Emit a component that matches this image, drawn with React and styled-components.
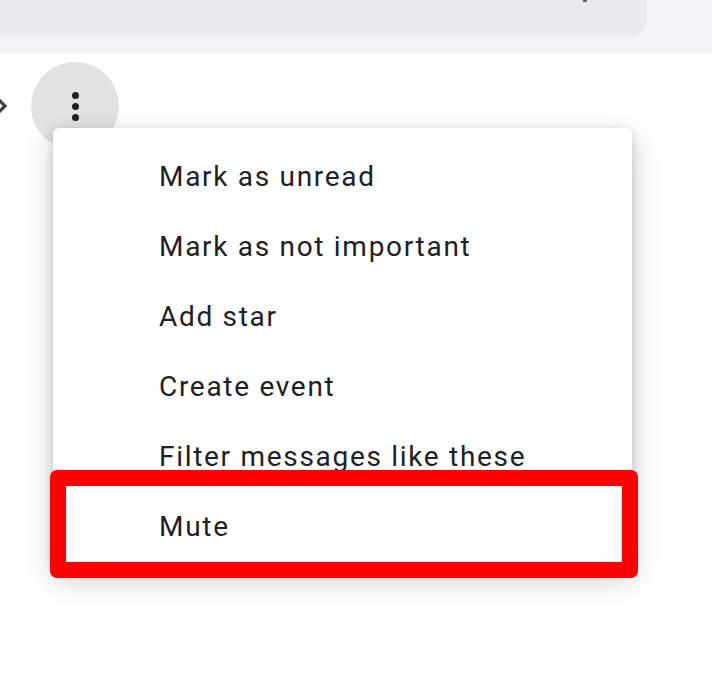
import React from 'react';
import styled, { createGlobalStyle } from 'styled-components';

const GlobalStyle = createGlobalStyle`
  html, body {
    margin: 0;
    padding: 0;
    background: #ffffff;
    font-family: Roboto, "Liberation Sans", Arial, sans-serif;
  }
`;

const Page = styled.div`
  position: relative;
  width: 712px;
  height: 692px;
  overflow: hidden;
  background: #ffffff;
`;

const Header = styled.header`
  height: 53px;
  background: #f1f3f4;
`;

const SearchBox = styled.div`
  position: relative;
  width: 647px;
  height: 35px;
  background: #e8eaed;
  border-radius: 0 0 16px 0;
`;

const SearchIconTip = styled.span`
  position: absolute;
  left: 583px;
  top: 0;
  width: 4px;
  height: 2px;
  background: #5f6368;
`;

const Toolbar = styled.div`
  display: flex;
  align-items: center;
  gap: 24px;
  padding-top: 9px;
`;

const BackGlyph = styled.svg`
  width: 12px;
  height: 14px;
  margin-left: -5px;
  color: #3c4043;
`;

const MoreButton = styled.button`
  width: 88px;
  height: 88px;
  border: none;
  border-radius: 50%;
  background: #e2e2e2;
  display: flex;
  flex-direction: column;
  align-items: center;
  justify-content: center;
  gap: 4px;
  padding: 0;
`;

const Dot = styled.span`
  width: 7px;
  height: 7px;
  border-radius: 50%;
  background: #202124;
`;

const Menu = styled.ul`
  position: absolute;
  top: 128px;
  left: 53px;
  width: 579px;
  margin: 0;
  padding: 13px 0 8px;
  list-style: none;
  background: #ffffff;
  border-radius: 6px;
  box-shadow: 0 10px 28px rgba(0, 0, 0, 0.22), 0 2px 8px rgba(0, 0, 0, 0.12);
`;

const MenuItem = styled.li`
  height: 70px;
  display: flex;
  align-items: center;
  padding-left: 106px;
  font-size: 28px;
  color: #202124;
  letter-spacing: 1.7px;
`;

const Highlight = styled.div`
  position: absolute;
  top: 470px;
  left: 50px;
  width: 588px;
  height: 108px;
  box-sizing: border-box;
  border: 16px solid #ff0000;
  border-radius: 7px;
`;

const items = [
  'Mark as unread',
  'Mark as not important',
  'Add star',
  'Create event',
  'Filter messages like these',
  'Mute',
];

export default function App() {
  return (
    <Page>
      <GlobalStyle />
      <Header>
        <SearchBox>
          <SearchIconTip />
        </SearchBox>
      </Header>
      <Toolbar>
        <BackGlyph viewBox="0 0 12 14">
          <path d="M4 1 L10 7 L4 13" fill="none" stroke="currentColor" strokeWidth="3.2" strokeLinejoin="miter" />
        </BackGlyph>
        <MoreButton>
          <Dot />
          <Dot />
          <Dot />
        </MoreButton>
      </Toolbar>
      <Menu>
        {items.map((label) => (
          <MenuItem key={label}>{label}</MenuItem>
        ))}
      </Menu>
      <Highlight />
    </Page>
  );
}
